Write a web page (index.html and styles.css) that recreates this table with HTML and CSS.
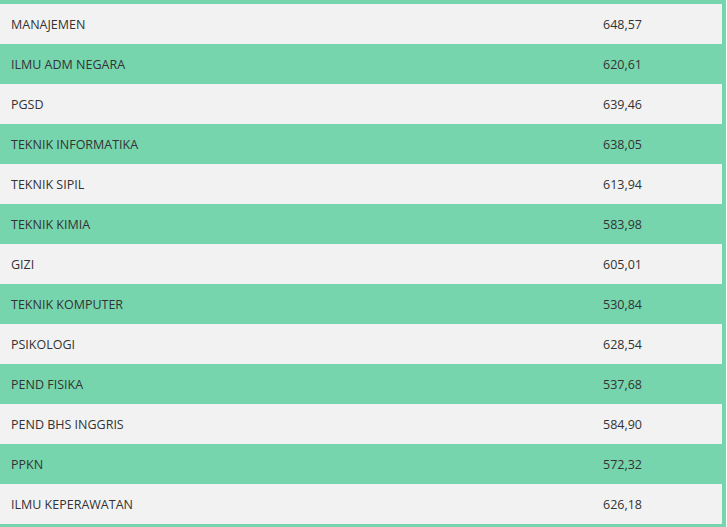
FILE: index.html
```html
<!DOCTYPE html>
<html>
<head>
<meta charset="utf-8">
<link rel="stylesheet" href="styles.css">
</head>
<body>
<div class="table">
  <div class="row"><span class="name">MANAJEMEN</span><span class="val">648,57</span></div>
  <div class="row alt"><span class="name">ILMU ADM NEGARA</span><span class="val">620,61</span></div>
  <div class="row"><span class="name">PGSD</span><span class="val">639,46</span></div>
  <div class="row alt"><span class="name">TEKNIK INFORMATIKA</span><span class="val">638,05</span></div>
  <div class="row"><span class="name">TEKNIK SIPIL</span><span class="val">613,94</span></div>
  <div class="row alt"><span class="name">TEKNIK KIMIA</span><span class="val">583,98</span></div>
  <div class="row"><span class="name">GIZI</span><span class="val">605,01</span></div>
  <div class="row alt"><span class="name">TEKNIK KOMPUTER</span><span class="val">530,84</span></div>
  <div class="row"><span class="name">PSIKOLOGI</span><span class="val">628,54</span></div>
  <div class="row alt"><span class="name">PEND FISIKA</span><span class="val">537,68</span></div>
  <div class="row"><span class="name">PEND BHS INGGRIS</span><span class="val">584,90</span></div>
  <div class="row alt"><span class="name">PPKN</span><span class="val">572,32</span></div>
  <div class="row"><span class="name">ILMU KEPERAWATAN</span><span class="val">626,18</span></div>
</div>
</body>
</html>
```
FILE: styles.css
```css
html, body {
  margin: 0;
  padding: 0;
  background: #ffffff;
}
.table {
  width: 722px;
  border-top: 4px solid #77d5ae;
  border-right: 4px solid #77d5ae;
  border-bottom: 4px solid #77d5ae;
  font-family: "Open Sans", sans-serif;
  font-size: 12.5px;
  color: #333333;
}
.row {
  display: grid;
  grid-template-columns: 603px 1fr;
  height: 40px;
  align-items: center;
  background: #f2f2f2;
}
.row.alt {
  background: #77d5ae;
}
.name {
  padding-left: 11px;
}
```
